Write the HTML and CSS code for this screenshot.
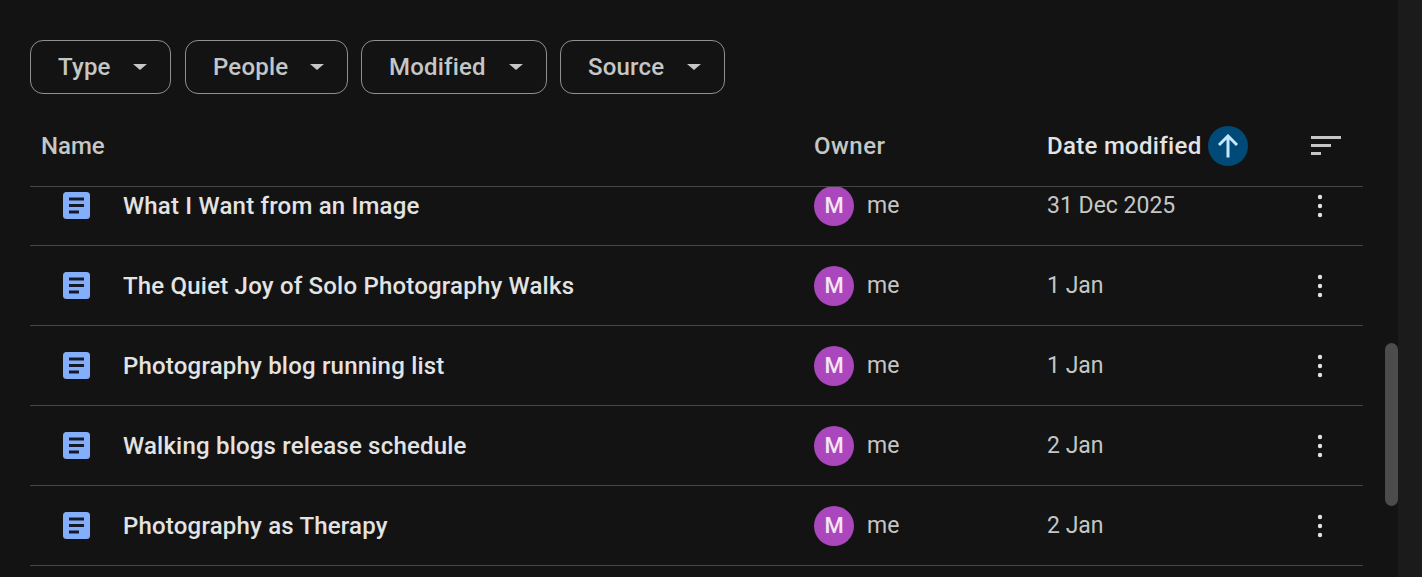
FILE: index.html
```html
<!DOCTYPE html>
<html lang="en">
<head>
    <meta charset="UTF-8">
    <title>Drive</title>
    <link rel="stylesheet" href="styles.css">
</head>
<body>
    <svg class="defs" width="0" height="0">
        <symbol id="doc" viewBox="0 0 27 27">
            <rect width="27" height="27" rx="3.5" fill="#84aef9"/>
            <path d="M6 5.500h15v3H6zM6 12h15v3H6zM6 18.500h10v3H6z" fill="#131a2c"/>
        </symbol>
        <symbol id="more" viewBox="0 0 6 24">
            <circle cx="3" cy="3" r="2.200" fill="#e3e3e3"/>
            <circle cx="3" cy="12" r="2.200" fill="#e3e3e3"/>
            <circle cx="3" cy="21" r="2.200" fill="#e3e3e3"/>
        </symbol>
    </svg>

    <div class="main">
        <div class="filters">
            <button class="chip chip-type">Type<span class="caret"></span></button>
            <button class="chip chip-people">People<span class="caret"></span></button>
            <button class="chip chip-modified">Modified<span class="caret"></span></button>
            <button class="chip chip-source">Source<span class="caret"></span></button>
        </div>

        <div class="table">
            <div class="head">
                <div class="head-name">Name</div>
                <div class="head-owner">Owner</div>
                <div class="head-date">
                    Date modified
                    <span class="sort-btn">
                        <svg width="24" height="24" viewBox="0 0 24 24"><path d="M12 23.500V2M3 11l9-9 9 9" fill="none" stroke="#c2e7ff" stroke-width="3"/></svg>
                    </span>
                </div>
                <div class="head-view">
                    <svg width="32" height="22" viewBox="0 0 32 22"><path d="M1 2.500h30M1 10.500h20M1 18.500h10" fill="none" stroke="#c4c7c5" stroke-width="3"/></svg>
                </div>
            </div>

            <div class="list">
                <div class="rows">
                    <div class="row">
                        <div class="row-name"><svg class="doc-icon"><use href="#doc"/></svg>What I Want from an Image</div>
                        <div class="owner"><span class="avatar">M</span>me</div>
                        <div class="date">31 Dec 2025</div>
                        <div class="more"><svg width="6" height="24"><use href="#more"/></svg></div>
                    </div>
                    <div class="row">
                        <div class="row-name"><svg class="doc-icon"><use href="#doc"/></svg>The Quiet Joy of Solo Photography Walks</div>
                        <div class="owner"><span class="avatar">M</span>me</div>
                        <div class="date">1 Jan</div>
                        <div class="more"><svg width="6" height="24"><use href="#more"/></svg></div>
                    </div>
                    <div class="row">
                        <div class="row-name"><svg class="doc-icon"><use href="#doc"/></svg>Photography blog running list</div>
                        <div class="owner"><span class="avatar">M</span>me</div>
                        <div class="date">1 Jan</div>
                        <div class="more"><svg width="6" height="24"><use href="#more"/></svg></div>
                    </div>
                    <div class="row">
                        <div class="row-name"><svg class="doc-icon"><use href="#doc"/></svg>Walking blogs release schedule</div>
                        <div class="owner"><span class="avatar">M</span>me</div>
                        <div class="date">2 Jan</div>
                        <div class="more"><svg width="6" height="24"><use href="#more"/></svg></div>
                    </div>
                    <div class="row">
                        <div class="row-name"><svg class="doc-icon"><use href="#doc"/></svg>Photography as Therapy</div>
                        <div class="owner"><span class="avatar">M</span>me</div>
                        <div class="date">2 Jan</div>
                        <div class="more"><svg width="6" height="24"><use href="#more"/></svg></div>
                    </div>
                </div>
            </div>
        </div>

        <div class="scroll-thumb"></div>
    </div>
    <div class="side"></div>
</body>
</html>
```

FILE: styles.css
```css
* {
    box-sizing: border-box;
}

html, body {
    height: 100%;
}

body {
    margin: 0;
    display: flex;
    overflow: hidden;
    background-color: #131313;
    color: #e3e3e3;
    font-family: Roboto, "Liberation Sans", sans-serif;
}

.defs {
    position: absolute;
}

.main {
    position: relative;
    flex: 1;
    height: 577px;
    padding: 40px 35px 0 30px;
    overflow: hidden;
}

.side {
    width: 24px;
    background-color: #1b1b1b;
}

.filters {
    display: flex;
    gap: 13px;
}

.chip {
    display: flex;
    align-items: center;
    justify-content: space-between;
    height: 54px;
    padding: 0 23px 0 27px;
    background: none;
    border: 1px solid #8e918f;
    border-radius: 13px;
    color: #c4c7c5;
    font-family: inherit;
    font-size: 24px;
    font-weight: 500;
    letter-spacing: 0.2px;
}

.chip-type { width: 141px; margin-right: 1px; }
.chip-people { width: 163px; }
.chip-modified { width: 186px; }
.chip-source { width: 165px; }

.caret {
    width: 0;
    height: 0;
    border-left: 7px solid transparent;
    border-right: 7px solid transparent;
    border-top: 6px solid #c4c7c5;
}

.head, .row {
    display: grid;
    grid-template-columns: 784px 233px 1fr 86px;
    align-items: center;
}

.head {
    height: 93px;
    padding-top: 12px;
    border-bottom: 1px solid #444746;
    color: #c4c7c5;
    font-size: 24px;
    font-weight: 500;
}

.head-name {
    padding-left: 11px;
}

.head-owner {
    letter-spacing: 0.5px;
}

.head-date {
    display: flex;
    align-items: center;
    gap: 7px;
    color: #e3e3e3;
    letter-spacing: 0.3px;
}

.sort-btn {
    display: flex;
    align-items: center;
    justify-content: center;
    width: 40px;
    height: 40px;
    border-radius: 50%;
    background-color: #004a77;
}

.head-view {
    display: flex;
    padding-left: 33px;
}

.list {
    height: 390px;
    overflow: hidden;
}

.rows {
    margin-top: -21px;
}

.row {
    height: 80px;
    border-bottom: 1px solid #444746;
    font-size: 23px;
}

.row-name {
    display: flex;
    align-items: center;
    gap: 33px;
    padding-left: 33px;
    font-size: 24px;
    font-weight: 500;
    letter-spacing: 0.2px;
}

.doc-icon {
    width: 27px;
    height: 27px;
}

.owner {
    display: flex;
    align-items: center;
    gap: 13px;
    color: #c4c7c5;
}

.avatar {
    display: flex;
    align-items: center;
    justify-content: center;
    width: 40px;
    height: 40px;
    border-radius: 50%;
    background-color: #ab47bc;
    color: #f3e5f5;
    font-size: 22px;
    font-weight: 500;
}

.date {
    color: #c4c7c5;
}

.more {
    display: flex;
    padding-left: 40px;
}

.scroll-thumb {
    position: absolute;
    right: 0;
    top: 343px;
    width: 13px;
    height: 163px;
    border-radius: 7px;
    background-color: #4a4d4b;
}
```
